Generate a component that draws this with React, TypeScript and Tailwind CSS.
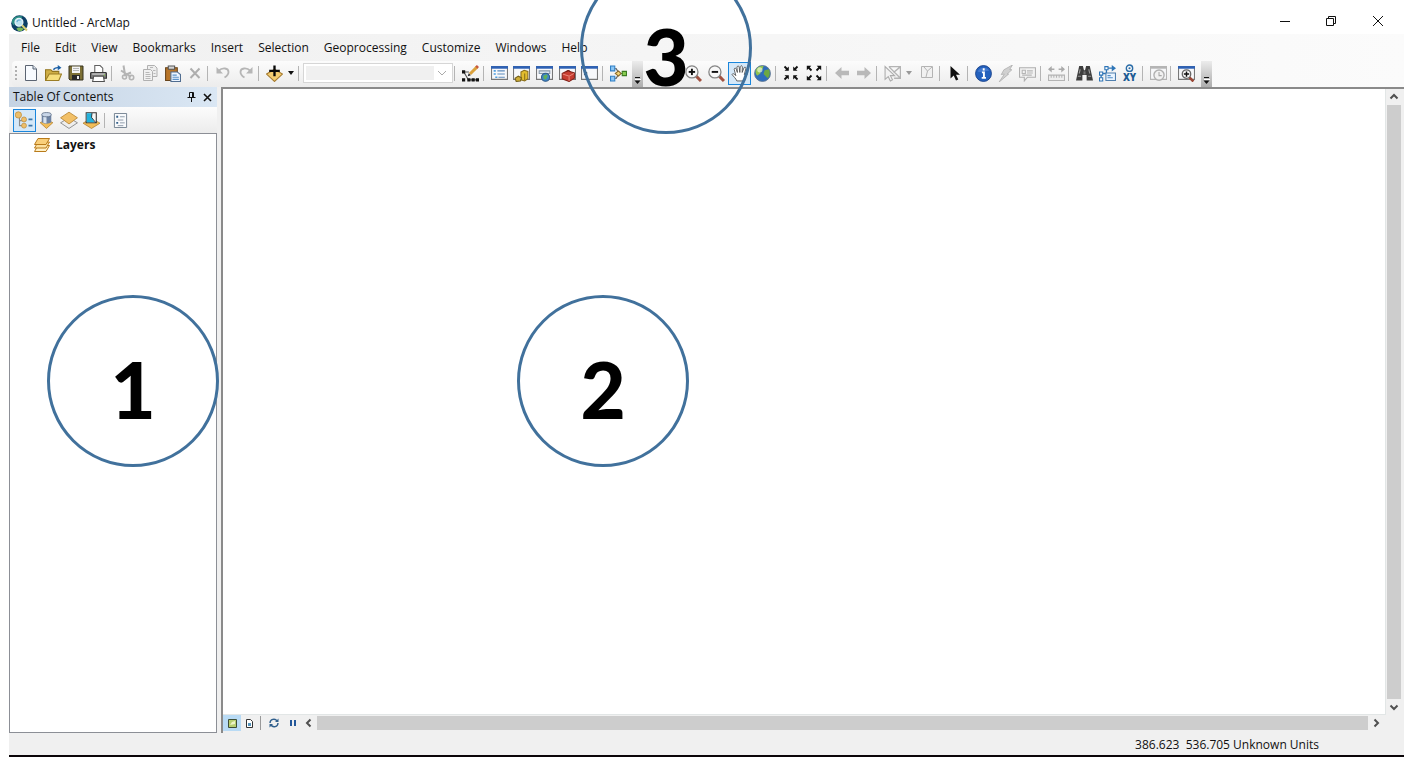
import React from "react";

type Kids = { children?: React.ReactNode };

function Svg({ children, size = "size-4" }: Kids & { size?: string }) {
  return (
    <svg viewBox="0 0 16 16" className={size + " shrink-0"} fill="none" aria-hidden="true">
      {children}
    </svg>
  );
}

function Tool({ label, active, children }: Kids & { label: string; active?: boolean }) {
  return (
    <button
      type="button"
      aria-label={label}
      className={
        "flex h-[23px] min-w-0 flex-1 items-center justify-center border " +
        (active ? "border-[#1a86dc] bg-[#d5e8f8]" : "border-transparent")
      }
    >
      {children}
    </button>
  );
}

function Group({ w, children }: Kids & { w: string }) {
  return <div className={"flex shrink-0 items-center " + w}>{children}</div>;
}

function Sep() {
  return (
    <span className="flex w-1.5 shrink-0 pl-px">
      <span className="h-[15px] w-px bg-[#b4b4b4]" />
    </span>
  );
}

function Caret({ color = "#111" }: { color?: string }) {
  return (
    <svg viewBox="0 0 6 4" className="h-1 w-1.5" aria-hidden="true">
      <path d="M0 0h6L3 4z" fill={color} />
    </svg>
  );
}

function Overflow() {
  return (
    <button
      type="button"
      aria-label="Toolbar options"
      className="ml-[3px] flex h-[26px] w-[11px] shrink-0 flex-col items-center justify-end self-start bg-linear-to-b from-[#ececec] to-[#adadad] pb-0.5"
    >
      <svg viewBox="0 0 7 8" className="h-2 w-[7px]" aria-hidden="true">
        <path d="M1 .5h5" stroke="#111" />
        <path d="M1 2.500h6" stroke="#fff" />
        <path d="M0.500 3.500h6L3.500 7z" fill="#111" />
      </svg>
    </button>
  );
}

const Logo = () => (
  <Svg size="size-[17px]">
    <circle cx="8" cy="8" r="7.800" fill="#0d3f66" />
    <path d="M1 5C3 1 8 0 11 1.500L9 4 4 5 3 10C1 9 .5 7 1 5z" fill="#2d8f86" />
    <path d="M5 13c2-2 5-1 7 0l-2 2H7z" fill="#78b85a" />
    <circle cx="7.500" cy="6.800" r="3.700" fill="#bde3f2" stroke="#e6f3f8" strokeWidth="1.200" />
    <path d="M5.500 6.500c1-2 2.500-2 3.500-1.500" stroke="#5ba4cc" />
    <path d="M10.400 9.700l4.600 4.800" stroke="#d8cd72" strokeWidth="2" />
  </Svg>
);

const NewDoc = () => (
  <Svg>
    <path d="M2.500.5h7.500l3.500 3.500v11.500h-11z" fill="#f8fbff" stroke="#5b6472" />
    <path d="M10 .5V4h3.500" fill="#dde5f0" stroke="#5b6472" />
  </Svg>
);
const Open = () => (
  <Svg size="size-[17px]">
    <path d="M.5 14.500V4.500h5l1.500 1.500h6v3" fill="#cfae45" stroke="#92751f" />
    <path d="M.5 14.500L4 8.500h11.500l-2.500 6z" fill="#f7df7c" stroke="#9b7d25" />
    <path d="M8 4.500C9 2 11 2.500 13.500 2.500" stroke="#1b5fa5" strokeWidth="1.400" />
    <path d="M12 0l3.500 2.600L12 5z" fill="#1b5fa5" />
  </Svg>
);
const Save = () => (
  <Svg>
    <path d="M1 1h14v14H2l-1-1z" fill="#7d7035" stroke="#37331f" />
    <path d="M4 1.500h8V8H4z" fill="#f4f4f4" />
    <path d="M5 3.500h6M5 5.500h6" stroke="#b5b5b5" />
    <path d="M4 10h8v5H4z" fill="#292929" />
    <path d="M9 11h2v3H9z" fill="#eee" />
  </Svg>
);
const Print = () => (
  <Svg size="size-[17px]">
    <path d="M4.500 7V.5h5l2.500 2.500v4" fill="#fff" stroke="#606060" />
    <path d="M1 7h14l.5 1v4.500H.5V8z" fill="#7b7b7b" stroke="#383838" />
    <path d="M2 8.500h12" stroke="#ddd" />
    <path d="M3.500 10.500h9l1 5h-11z" fill="#fff" stroke="#505050" />
    <path d="M13 9.500h1" stroke="#7dc83e" />
  </Svg>
);
const Cut = () => (
  <Svg>
    <path d="M4.500 0.500l1.500 9M2 5.500l10 6.500M12 7.500l-7 3" stroke="#b4b4b4" strokeWidth="2" />
    <circle cx="5.500" cy="12" r="2" stroke="#b4b4b4" strokeWidth="1.600" />
    <circle cx="12.500" cy="12.500" r="2.200" stroke="#b4b4b4" strokeWidth="1.600" />
  </Svg>
);
const Copy = () => (
  <Svg>
    <path d="M5.500.5h7l2.500 2.500v8.500h-9.500z" fill="#eee" stroke="#b0b0b0" />
    <path d="M1.500 4.500h7l2 2v9h-9z" fill="#f1f1f1" stroke="#b0b0b0" />
    <path d="M3.500 7.500h4M3.500 9.500h5M3.500 11.500h5M3.500 13.500h5M8 2.500h3M11 5.500h2.500M11.500 8.500h2" stroke="#b8b8b8" />
  </Svg>
);
const Paste = () => (
  <Svg size="size-[17px]">
    <path d="M1.500 2.500h11v12h-11z" fill="#b87528" stroke="#68451c" />
    <path d="M4 1h6v3H4z" fill="#d5d5d5" stroke="#555" />
    <path d="M6.500 6.500h6l3 2.500v6.500h-9z" fill="#edf5ff" stroke="#506d90" />
    <path d="M8 9.500h4M8 11.500h6M8 13.500h6" stroke="#5c93c9" />
  </Svg>
);
const Del = () => (
  <Svg>
    <path d="M3.500 3.500l9 9.500M12.500 3.500l-9 9.500" stroke="#aeaeae" strokeWidth="2" />
  </Svg>
);
const Undo = () => (
  <Svg>
    <path d="M3.500 6c4-4 10-3 10 1 0 2.500-1.500 4-4 5.500" stroke="#b6b6b6" strokeWidth="1.800" />
    <path d="M1.500 2v6.500H8z" fill="#b6b6b6" />
  </Svg>
);
const Redo = () => (
  <Svg>
    <path d="M12.500 6c-4-4-10-3-10 1 0 2.500 1.500 4 4 5.500" stroke="#b6b6b6" strokeWidth="1.800" />
    <path d="M14.500 2v6.500H8z" fill="#b6b6b6" />
  </Svg>
);
const AddData = () => (
  <Svg size="size-[17px]">
    <path d="M.5 8.500L8 4l7.500 4.500-7.500 7z" fill="#f3cc72" stroke="#a57a2d" />
    <path d="M8 .5v10M3 5.500h10" stroke="#080808" strokeWidth="2.200" />
  </Svg>
);
const Editor = () => (
  <Svg size="size-[17px]">
    <path d="M1.500 6.500h5M2 7l4 7h8" stroke="#555" />
    <path d="M0 5h3v3H0zM5 12.500h3v3H5zM9 12.500h3v3H9zM13 12.500h3v3h-3zM0 12.500h3v3H0z" fill="#111" />
    <path d="M7.500 8.500l6.500-6.500" stroke="#dba13c" strokeWidth="2.800" />
    <path d="M13.500 2.500l1.500-1.500" stroke="#c7573e" strokeWidth="2.800" />
    <path d="M5.500 10.500l.8-2.800 2 2z" fill="#222" />
  </Svg>
);

function Win({ children, bar = "#2e62b5", line = "#777" }: Kids & { bar?: string; line?: string }) {
  return (
    <Svg size="size-[17px]">
      <path d="M.5 1.500h15v12H.5z" fill="#f7f8fa" stroke={line} />
      <path d="M0 1h16v2.500H0z" fill={bar} />
      {children}
    </Svg>
  );
}

const TocWin = () => (
  <Win>
    <path d="M2.500 5.500h2M2.500 8.500h2M4 11.500h2" stroke="#4d9ee0" strokeWidth="1.500" />
    <path d="M6 5.500h7M6 8.500h7M7 11.500h6" stroke="#5d8bbd" />
  </Win>
);
const CatalogWin = () => (
  <Win>
    <path d="M7.500 6.500l3-1.500 3.500 1v7l-3 2-3.500-1z" fill="#e2bd2e" stroke="#8b701b" />
    <path d="M11 8v6.500" stroke="#8b701b" />
    <path d="M2 12.500l3-2 3 1.500-1 3-4 .5z" fill="#cfae36" stroke="#74601c" />
  </Win>
);
const SearchWin = () => (
  <Win>
    <path d="M3 5.500h10v2.500H3z" fill="#dfe8f3" stroke="#89a" />
    <circle cx="9" cy="11.500" r="3.800" fill="#3d86cd" stroke="#315b86" />
    <path d="M7 10l3-1.200 1 2-2 3-2-1z" fill="#61b05a" />
  </Win>
);
const ToolboxWin = () => (
  <Win>
    <path d="M3 8l5-2.500 6.500 2V12.500l-5 3L3 13z" fill="#c83d30" stroke="#842219" />
    <path d="M3.500 8.500l6 2 4.500-2.500M9.500 11v4" stroke="#f19a8b" strokeWidth="0.800" />
    <path d="M7 6.500c1-2 3-1.500 3.500 0" stroke="#711b15" />
  </Win>
);
const PythonWin = () => (
  <Win>
    <path d="M3 6l2 1.500L3 9" stroke="#111" strokeWidth="1.500" />
  </Win>
);
const Model = () => (
  <Svg size="size-[17px]">
    <path d="M3 3.500h3l2 4M3 12.500h3l2-4M8 8h5" stroke="#555" />
    <path d="M.5 1h4v4.500h-4zM.5 10.500h4V15h-4z" fill="#8bc6f5" stroke="#2f7fc5" />
    <path d="M5 8l3-2.500L10.500 8 8 10.500z" fill="#f1d277" stroke="#8a6b29" />
    <path d="M11.500 6h4v4h-4z" fill="#89cd50" stroke="#3c7c22" />
  </Svg>
);

function Zoomer({ plus }: { plus?: boolean }) {
  return (
    <Svg size="size-[17px]">
      <path d="M10.500 10.500l4.500 4.500" stroke="#a15241" strokeWidth="2.800" />
      <circle cx="6.500" cy="6.500" r="5.700" fill="#f8f8f8" stroke="#858585" strokeWidth="1.200" />
      <path d="M3.500 6.500h6" stroke="#111" strokeWidth="1.800" />
      {plus && <path d="M6.500 3.500v6" stroke="#111" strokeWidth="1.800" />}
    </Svg>
  );
}
const Pan = () => (
  <Svg size="size-[17px]">
    <path
      d="M5.500 15c-1-2.500-3-4-4.500-6 .5-1.500 2-.8 3.500 1L3 4c.3-1.500 1.500-1.300 2 0l1 3L5.600 2c.6-1.700 1.900-1 2.100 0L8.300 7l.4-5.500c.8-1.500 2-.6 2 .5L10.500 7l1.800-4.500c1-1 2-.2 1.700 1L12.500 9c2-1.300 3-1 2.500.2-1.500 2-3 4-3.500 5.800z"
      fill="#fff"
      stroke="#4a4a4a"
      strokeWidth="0.800"
    />
  </Svg>
);
const Globe = () => (
  <Svg size="size-[17px]">
    <circle cx="8" cy="8" r="7.500" fill="#2f6dbb" stroke="#5f7690" strokeWidth="0.800" />
    <path d="M2 4c2-3 5-3.500 7-3L8 4 6 5v3L3 10C1 8 1.300 6 2 4z" fill="#8fc14e" />
    <path d="M10 5l4-1c1.500 3 1 6-1 8.500l-2-2-2-2z" fill="#6da843" />
    <circle cx="5.500" cy="4.500" r="2.500" fill="#eaf8d5" opacity=".7" />
  </Svg>
);
const ZoomInFixed = () => (
  <Svg>
    <path d="M1.500 1.500l3 3M14.500 1.500l-3 3M1.500 14.500l3-3M14.500 14.500l-3-3" stroke="#111" strokeWidth="1.800" />
    <path d="M5.800 1.500v4.300H1.500zM10.200 1.500v4.300h4.300zM5.800 14.500v-4.300H1.500zM10.200 14.500v-4.300h4.300z" fill="#111" />
  </Svg>
);
const ZoomOutFixed = () => (
  <Svg>
    <path d="M2 2l3.500 3.500M14 2l-3.500 3.500M2 14l3.500-3.500M14 14l-3.500-3.500" stroke="#111" strokeWidth="1.800" />
    <path d="M.8.800h4.500L.8 5.300zM15.200.800h-4.500l4.500 4.500zM.8 15.200h4.500L.8 10.700zM15.200 15.200h-4.500l4.500-4.500z" fill="#111" />
  </Svg>
);
const Back = () => (
  <Svg>
    <path d="M1 8l6.500-6v3.800H15v4.400H7.500V14z" fill="#b9b9b9" />
  </Svg>
);
const Fwd = () => (
  <Svg>
    <path d="M15 8L8.500 2v3.800H1v4.400h7.500V14z" fill="#b9b9b9" />
  </Svg>
);
const SelectFeat = () => (
  <Svg size="size-[17px]">
    <path d="M4.500 1.500h11v11h-6M5 2l10 10M15 2l-6 5" stroke="#b4b4b4" strokeWidth="1.300" />
    <path d="M1 1.500v12l3-2.500 2 4 2-1-2-4h4z" fill="#f2f2f2" stroke="#acacac" />
  </Svg>
);
const ClearSel = () => (
  <Svg>
    <path d="M2.500 1.500h11v11h-11z" fill="#f1f1f1" stroke="#b4b4b4" />
    <path d="M5 2l3.500 4L13 2M8.500 6L7 12" stroke="#b4b4b4" />
  </Svg>
);
const Pointer = () => (
  <Svg>
    <path d="M3.500 1v12.500l3.200-3 2.300 5 2.300-1.100-2.300-4.700H13z" fill="#111" />
  </Svg>
);
const Identify = () => (
  <Svg size="size-[17px]">
    <circle cx="8" cy="8" r="7.500" fill="#2461bd" stroke="#163f86" strokeWidth="0.800" />
    <path d="M2.500 6C4 2 11 1 13.500 5.500 10 5 6 8 2.500 6z" fill="#5b8cdb" opacity=".6" />
    <path d="M8.200 3v2.200M6.500 6.900h1.900v5M6.300 12.100h4" stroke="#fff" strokeWidth="1.800" />
  </Svg>
);
const Bolt = () => (
  <Svg size="size-[17px]">
    <path d="M14.500 0L6.500 4.500 4 9l3-.5L2 16l9-7.500L9.500 8.500 14 4.500l-2-.3z" fill="#d0d0d0" stroke="#b2b2b2" strokeWidth="0.800" />
  </Svg>
);
const Popup = () => (
  <Svg size="size-[17px]">
    <path d="M.5 2.500h15v9H8L5 15v-3.500H.5z" fill="#f2f2f2" stroke="#b0b0b0" />
    <path d="M3 5h3v3H3zM7.500 5.500H13M7.500 7.500H13M3 9.500h9" stroke="#b5b5b5" />
  </Svg>
);
const Measure = () => (
  <Svg size="size-[17px]">
    <path d="M.5 9.500h15v5H.5zM3 10v2M5.500 10v2M8 10v2M10.500 10v2M13 10v2" fill="#eee" stroke="#b4b4b4" />
    <path d="M1 4h5M10 4h5" stroke="#aaa" strokeWidth="1.500" />
    <path d="M0 4l3.500-3v6zM16 4l-3.500-3v6z" fill="#aaa" />
  </Svg>
);
const Find = () => (
  <Svg size="size-[17px]">
    <path d="M3 1h3.500l1 4h1l1-4H13l3 13.500h-6V9.500H6v5H0z" fill="#3d3d3d" />
    <path d="M1.700 10.500h3M11.300 10.500h3M4 4l-1 4M12 4l1 4" stroke="#999" />
    <path d="M7 6h2v3H7z" fill="#707070" />
  </Svg>
);
const FindRoute = () => (
  <Svg size="size-[17px]">
    <path d="M2 13V8h5V3h6" stroke="#2e75b7" strokeWidth="1.200" />
    <path d="M12 0l4 3-4 3z" fill="#2e75b7" />
    <path d="M.5 6.500h3v3h-3zM5.500 1.500h3v3h-3zM.5 12h3v3h-3z" fill="#fff" stroke="#2e75b7" />
    <path d="M6.500 7.500h9v7h-9z" fill="#e9f4ff" stroke="#4f7fae" />
    <path d="M8 10h3M8 12h5" stroke="#4f8ac5" />
  </Svg>
);
const GoToXY = () => (
  <svg viewBox="0 0 16 16" className="size-[17px] overflow-visible" aria-hidden="true">
    <circle cx="8" cy="3" r="3" fill="none" stroke="#2b6da8" strokeWidth="1.300" />
    <circle cx="8" cy="3" r="1" fill="#2b6da8" />
    <text x="8" y="15.500" textAnchor="middle" fontSize="9" fontWeight="800" fill="#1d5b94" fontFamily="Open Sans, sans-serif">
      XY
    </text>
  </svg>
);
const TimeSlider = () => (
  <Win bar="#b5b5b5" line="#b5b5b5">
    <circle cx="8.500" cy="9.500" r="4.800" fill="#f1f1f1" stroke="#b0b0b0" strokeWidth="1.300" />
    <path d="M8.500 6.500v3.500h2.500" stroke="#a8a8a8" />
  </Win>
);
const Viewer = () => (
  <Win>
    <path d="M10.500 11.500l4 4" stroke="#9a4634" strokeWidth="2.400" />
    <circle cx="8" cy="8.500" r="4" fill="#f9f9f9" stroke="#666" strokeWidth="1.200" />
    <path d="M5.500 8.500h5M8 6v5" stroke="#111" strokeWidth="1.400" />
  </Win>
);

const ByDrawing = () => (
  <Svg size="size-[18px]">
    <path d="M4 6v7h5M4 8.500h6" stroke="#8b8b8b" />
    <circle cx="3" cy="3.500" r="2.800" fill="#edbe69" stroke="#c09042" strokeWidth="0.700" />
    <circle cx="8" cy="7.500" r="2.200" fill="#edbe69" stroke="#c09042" strokeWidth="0.700" />
    <circle cx="8" cy="13" r="2.200" fill="#edbe69" stroke="#c09042" strokeWidth="0.700" />
    <path d="M12 7.500h3.500M12 13h3.500" stroke="#3a75a9" strokeWidth="1.600" />
  </Svg>
);
const BySource = () => (
  <Svg size="size-[17px]">
    <path d="M2 10l6-2.500 6 2.500-6 5.500z" fill="#f2bd57" stroke="#b07c2d" strokeWidth="0.700" />
    <path d="M3.500 2.500v7c1.500 2 7.500 2 9 0v-7z" fill="#6e83a3" />
    <path d="M5 4v6l3 .8V4z" fill="#d8e3f0" />
    <ellipse cx="8" cy="2.500" rx="4.500" ry="2" fill="#c9d6e8" stroke="#53657f" strokeWidth="0.700" />
  </Svg>
);
const ByVisibility = () => (
  <Svg size="size-[18px]">
    <path d="M.5 10.500L8 6l7.500 4.500L8 15.500z" fill="#eee" stroke="#888" strokeWidth="0.800" />
    <path d="M.5 6L8 1l7.500 5L8 11.500z" fill="#f2c067" stroke="#bd8b3a" strokeWidth="0.800" />
  </Svg>
);
const BySelection = () => (
  <Svg size="size-[17px]">
    <path d="M0 10.500L8 6l8 4.500-8 5z" fill="#f2bd57" stroke="#b07c2d" strokeWidth="0.700" />
    <path d="M3 .7h9.500v9.500H3z" fill="#f7f7f7" stroke="#333" />
    <path d="M3.500 1.200h5L8 5l3 4.700H3.500z" fill="#24b2dc" />
    <path d="M8.500 1L8 5l4 5" stroke="#222" strokeWidth="0.800" />
  </Svg>
);
const Options = () => (
  <Svg size="size-[15px]">
    <path d="M1.500.500h13v15h-13z" fill="#f8fafc" stroke="#71808f" />
    <path d="M3.500 3h2v2h-2zM3.500 9.500h2v2h-2z" fill="#315d88" />
    <path d="M7.500 4h5M7.500 10.500h5M5 7.500h6M5 13.500h6" stroke="#8b98a6" />
  </Svg>
);
const LayersIcon = () => (
  <Svg>
    <path d="M4 8.500h11.500l-3.500 6H.5z" fill="#fff1c9" stroke="#b97b1b" />
    <path d="M4 5h11.500L12 11H.5z" fill="#fbe0a0" stroke="#b97b1b" />
    <path d="M4 1.500h11.500L12 7.500H.5z" fill="#f9cf7b" stroke="#b97b1b" />
  </Svg>
);

const chevrons = {
  up: "M1.500 6.500L5 3l3.500 3.500",
  down: "M1.500 3.500L5 7l3.500-3.500",
  left: "M6.500 1.500L3 5l3.500 3.500",
  right: "M3.500 1.500L7 5 3.500 8.500",
};

function ScrollButton({ dir }: { dir: keyof typeof chevrons }) {
  return (
    <button type="button" aria-label={"Scroll " + dir} className="flex size-4 shrink-0 items-center justify-center">
      <svg viewBox="0 0 10 10" className="size-2.5" fill="none" aria-hidden="true">
        <path d={chevrons[dir]} stroke="#505050" strokeWidth="2" />
      </svg>
    </button>
  );
}

function Callout({ n, at }: { n: number; at: string }) {
  return (
    <div
      className={
        "pointer-events-none absolute flex size-[172px] items-center justify-center rounded-full border-3 border-[#41719c] pt-4 font-['Lato',sans-serif] text-[78px] leading-none font-black text-black " +
        at
      }
    >
      {n}
    </div>
  );
}

const menus = ["File", "Edit", "View", "Bookmarks", "Insert", "Selection", "Geoprocessing", "Customize", "Windows", "Help"];

export default function App() {
  return (
    <div className="relative flex h-screen flex-col overflow-hidden bg-white pr-[19px] pl-[9px] font-['Open_Sans','Noto_Sans',sans-serif] text-xs text-[#111]">
      <header className="flex h-[34px] shrink-0 items-center pt-3 pr-0.5 pl-0.5">
        <Logo />
        <h1 className="ml-1 flex-1 text-xs">Untitled - ArcMap</h1>
        <div className="flex items-center pb-1">
          <button type="button" aria-label="Minimize" className="flex w-[46px] justify-center">
            <svg viewBox="0 0 12 12" className="size-3" aria-hidden="true">
              <path d="M1 6.500h10" stroke="#111" />
            </svg>
          </button>
          <button type="button" aria-label="Restore" className="flex w-[46px] justify-center">
            <svg viewBox="0 0 12 12" className="size-3" fill="none" stroke="#111" aria-hidden="true">
              <path d="M1.500 3.500h7v7h-7zM3.500 3.500v-2h7v7h-2" />
            </svg>
          </button>
          <button type="button" aria-label="Close" className="flex w-12 justify-center">
            <svg viewBox="0 0 12 12" className="size-3" fill="none" stroke="#111" aria-hidden="true">
              <path d="M1 1l10 10M11 1L1 11" />
            </svg>
          </button>
        </div>
      </header>

      <div className="shrink-0 bg-linear-to-r from-[#f0f0f0] to-[#fbfbfb]">
        <nav className="flex h-[27px] items-center gap-[15px] pl-3">
          {menus.map((m) => (
            <button key={m} type="button">
              {m}
            </button>
          ))}
        </nav>

        <div className="flex h-[26px] items-center pl-[3px]">
          <div className="flex h-[26px] items-center rounded-l bg-linear-to-b from-[#fcfcfc] to-[#ececec] pb-0.5">
            <span className="flex w-2 shrink-0 flex-col items-center gap-0.5">
              {[0, 1, 2, 3].map((i) => (
                <span key={i} className="size-0.5 bg-[#b0b0b0]" />
              ))}
            </span>
            <Group w="w-[90px]">
              <Tool label="New"><NewDoc /></Tool>
              <Tool label="Open"><Open /></Tool>
              <Tool label="Save"><Save /></Tool>
              <Tool label="Print"><Print /></Tool>
            </Group>
            <Sep />
            <Group w="w-[90px]">
              <Tool label="Cut"><Cut /></Tool>
              <Tool label="Copy"><Copy /></Tool>
              <Tool label="Paste"><Paste /></Tool>
              <Tool label="Delete"><Del /></Tool>
            </Group>
            <Sep />
            <Group w="w-[45px]">
              <Tool label="Undo"><Undo /></Tool>
              <Tool label="Redo"><Redo /></Tool>
            </Group>
            <Sep />
            <Group w="w-[22px]">
              <Tool label="Add data"><AddData /></Tool>
            </Group>
            <Group w="w-3">
              <Tool label="Add data options"><Caret /></Tool>
            </Group>
            <Sep />
            <span className="flex h-5 w-[150px] shrink-0 items-center border border-[#d6d6d6] bg-white p-0.5">
              <select aria-label="Map scale" disabled className="h-full w-32 appearance-none bg-[#f0f0f0]" />
              <svg viewBox="0 0 10 6" className="mx-auto h-1.5 w-2.5" fill="none" aria-hidden="true">
                <path d="M1 1l4 4 4-4" stroke="#aaa" />
              </svg>
            </span>
            <Sep />
            <Group w="w-[23px]">
              <Tool label="Editor toolbar"><Editor /></Tool>
            </Group>
            <Sep />
            <Group w="w-[113px]">
              <Tool label="Table of contents"><TocWin /></Tool>
              <Tool label="Catalog"><CatalogWin /></Tool>
              <Tool label="Search"><SearchWin /></Tool>
              <Tool label="ArcToolbox"><ToolboxWin /></Tool>
              <Tool label="Python"><PythonWin /></Tool>
            </Group>
            <Sep />
            <Group w="w-[22px]">
              <Tool label="ModelBuilder"><Model /></Tool>
            </Group>
            <Overflow />
          </div>

          <div className="flex h-[26px] items-center bg-linear-to-b from-[#fcfcfc] to-[#ececec] pb-0.5 pl-[39px]">
            <Group w="w-[92px]">
              <Tool label="Zoom in"><Zoomer plus /></Tool>
              <Tool label="Zoom out"><Zoomer /></Tool>
              <Tool label="Pan" active><Pan /></Tool>
              <Tool label="Full extent"><Globe /></Tool>
            </Group>
            <Sep />
            <Group w="w-[45px]">
              <Tool label="Fixed zoom in"><ZoomInFixed /></Tool>
              <Tool label="Fixed zoom out"><ZoomOutFixed /></Tool>
            </Group>
            <Sep />
            <Group w="w-11">
              <Tool label="Previous extent"><Back /></Tool>
              <Tool label="Next extent"><Fwd /></Tool>
            </Group>
            <Sep />
            <Group w="w-[22px]">
              <Tool label="Select features"><SelectFeat /></Tool>
            </Group>
            <Group w="w-3">
              <Tool label="Select options"><Caret color="#999" /></Tool>
            </Group>
            <Group w="w-[23px]">
              <Tool label="Clear selection"><ClearSel /></Tool>
            </Group>
            <Sep />
            <Group w="w-[22px]">
              <Tool label="Select elements"><Pointer /></Tool>
            </Group>
            <Sep />
            <Group w="w-[67px]">
              <Tool label="Identify"><Identify /></Tool>
              <Tool label="Hyperlink"><Bolt /></Tool>
              <Tool label="HTML popup"><Popup /></Tool>
            </Group>
            <Sep />
            <Group w="w-[22px]">
              <Tool label="Measure"><Measure /></Tool>
            </Group>
            <Sep />
            <Group w="w-[68px]">
              <Tool label="Find"><Find /></Tool>
              <Tool label="Find route"><FindRoute /></Tool>
              <Tool label="Go to XY"><GoToXY /></Tool>
            </Group>
            <Sep />
            <Group w="w-[22px]">
              <Tool label="Time slider"><TimeSlider /></Tool>
            </Group>
            <Sep />
            <Group w="w-[23px]">
              <Tool label="Viewer window"><Viewer /></Tool>
            </Group>
            <Overflow />
          </div>
        </div>
      </div>

      <main className="flex min-h-0 flex-1 bg-[#f0f0f0]">
        <aside className="flex w-[208px] shrink-0 flex-col">
          <div className="flex h-5 shrink-0 items-center gap-1 bg-linear-to-r from-[#c5d3e3] to-[#dae7f4] pr-1 pl-1">
            <h2 className="flex-1">Table Of Contents</h2>
            <button type="button" aria-label="Auto hide" className="flex w-3 justify-center">
              <svg viewBox="0 0 9 10" className="h-2.5 w-[9px]" fill="none" stroke="#111" aria-hidden="true">
                <path d="M2.500 5.500v-5h4v5M.5 5.500h8M4.500 6v4" />
                <path d="M5.500 1v4.500" />
              </svg>
            </button>
            <button type="button" aria-label="Close panel" className="flex w-3 justify-center">
              <svg viewBox="0 0 9 9" className="size-[9px]" fill="none" stroke="#111" aria-hidden="true">
                <path d="M1 1l7 7M8 1L1 8" strokeWidth="1.600" />
              </svg>
            </button>
          </div>
          <div className="flex h-[26px] shrink-0 items-center bg-linear-to-b from-[#fcfcfc] to-[#ececec] pl-1">
            <Group w="w-[90px]">
              <Tool label="List by drawing order" active><ByDrawing /></Tool>
              <Tool label="List by source"><BySource /></Tool>
              <Tool label="List by visibility"><ByVisibility /></Tool>
              <Tool label="List by selection"><BySelection /></Tool>
            </Group>
            <Sep />
            <Group w="w-[22px]">
              <Tool label="Options"><Options /></Tool>
            </Group>
          </div>
          <div className="flex-1 border border-[#8c8f96] bg-white">
            <div className="flex h-[22px] items-center gap-1.5 pl-6 font-bold">
              <LayersIcon />
              <span>Layers</span>
            </div>
          </div>
        </aside>

        <section aria-label="Map" className="ml-1 flex min-w-0 flex-1 flex-col border-t-2 border-l-2 border-[#8a8a8a] pr-0.5 pb-0.5">
          <div className="flex min-h-0 flex-1">
            <div className="flex-1 border-r border-b border-[#e2e6e6] bg-white" />
            <div className="flex w-4 shrink-0 flex-col items-center">
              <ScrollButton dir="up" />
              <div className="w-3.5 flex-1 bg-[#cdcdcd]" />
              <ScrollButton dir="down" />
            </div>
          </div>
          <div className="flex h-4 shrink-0 items-center pr-[18px]">
            <button type="button" aria-label="Data view" className="flex h-4 w-[18px] items-center justify-center bg-[#b9dbf5]">
              <svg viewBox="0 0 9 9" className="size-[9px]" aria-hidden="true">
                <path d="M.5.500h8v8h-8z" fill="#b7cf72" stroke="#3c4d36" />
                <path d="M2 6l2-3 3-1v3z" fill="#eef4c7" />
              </svg>
            </button>
            <button type="button" aria-label="Layout view" className="flex h-4 w-4 items-center justify-center">
              <svg viewBox="0 0 9 9" className="size-[9px]" aria-hidden="true">
                <path d="M1.500.500h4l2 2v6h-6z" fill="#fff" stroke="#333" />
                <path d="M3 4h3v3H3z" fill="#5595bd" />
              </svg>
            </button>
            <span className="mx-[3px] h-3.5 w-px bg-[#999]" />
            <button type="button" aria-label="Refresh" className="flex h-4 w-5 items-center justify-center">
              <svg viewBox="0 0 10 10" className="size-2.5" fill="none" stroke="#31608d" strokeWidth="1.400" aria-hidden="true">
                <path d="M1 5a3.800 3.800 0 0 1 7-2M9 5a3.800 3.800 0 0 1-7 2" />
                <path d="M9.500.500v3.500H6zM.5 9.500V6H4z" fill="#31608d" stroke="none" />
              </svg>
            </button>
            <button type="button" aria-label="Pause drawing" className="flex h-4 w-[17px] items-center justify-center">
              <svg viewBox="0 0 8 8" className="size-2" aria-hidden="true">
                <path d="M1 1h2v6H1zM5 1h2v6H5z" fill="#24589a" />
              </svg>
            </button>
            <ScrollButton dir="left" />
            <div className="h-3.5 flex-1 bg-[#cdcdcd]" />
            <ScrollButton dir="right" />
          </div>
        </section>
      </main>

      <footer className="flex h-6 shrink-0 items-center justify-end border-b-2 border-[#0a0408] bg-[#f0f0f0] pt-0.5 pr-[85px]">
        <span className="whitespace-pre">386.623  536.705 Unknown Units</span>
      </footer>

      <Callout n={1} at="top-[295px] left-[47px]" />
      <Callout n={2} at="top-[295px] left-[517px]" />
      <Callout n={3} at="-top-[38px] left-[580px]" />
    </div>
  );
}
